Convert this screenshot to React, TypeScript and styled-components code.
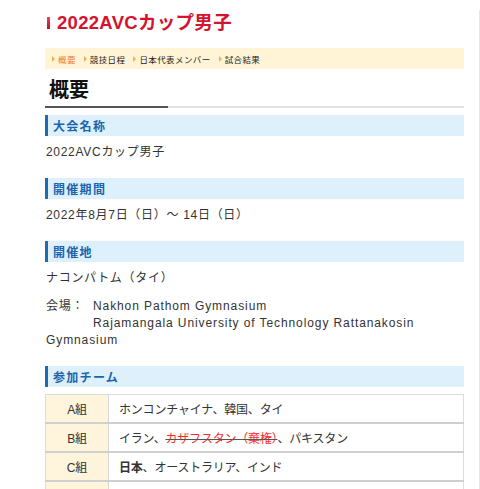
import React from "react";
import styled, { createGlobalStyle } from "styled-components";

const GlobalStyle = createGlobalStyle`
  html, body { margin: 0; padding: 0; background: #fff; }
  body {
    font-family: "Liberation Sans", "Noto Sans CJK JP", sans-serif;
    color: #333;
  }
`;

const Page = styled.div`
  display: flex;
  width: 480px;
  min-height: 489px;
`;

const Main = styled.main`
  width: 419px;
  margin-left: 45px;
  padding-top: 12px;
`;

const Side = styled.aside`
  margin-left: 15px;
  margin-top: 10px;
  border-left: 1px solid #e6e6e6;
`;

const Title = styled.h1`
  display: flex;
  align-items: center;
  gap: 7px;
  margin: 0;
  padding-left: 2px;
  font-size: 18.5px;
  font-weight: bold;
  color: #d5132d;
  line-height: 22px;
  letter-spacing: 0.3px;
`;

const TitleBar = styled.span`
  display: block;
  width: 3px;
  height: 12px;
  background: linear-gradient(#e8465a, #c80a24);
`;

const Crumbs = styled.nav`
  display: flex;
  align-items: center;
  height: 21px;
  margin-top: 14px;
  padding-left: 7px;
  background: #fff5d6;
  gap: 8px;
`;

const Crumb = styled.span<{ $active?: boolean }>`
  display: flex;
  align-items: center;
  gap: 3px;
  font-size: 8.5px;
  letter-spacing: 0.4px;
  color: ${(p) => (p.$active ? "#f27b2c" : "#222")};
`;

const Arrow = styled.span`
  display: block;
  width: 0;
  height: 0;
  border-top: 3px solid transparent;
  border-bottom: 3px solid transparent;
  border-left: 3px solid #f6b04a;
`;

const PageHeading = styled.h2`
  margin: 8px 0 0;
  padding: 0 0 3px 4px;
  font-size: 20px;
  line-height: 26px;
  font-weight: bold;
  color: #111;
  border-bottom: 2px solid #e2e2e2;
  position: relative;
  &::after {
    content: "";
    position: absolute;
    left: 0;
    bottom: -2px;
    width: 123px;
    height: 2px;
    background: #555;
  }
`;

const Section = styled.section`
  margin-top: 7px;
  margin-bottom: 17px;
`;

const SectionHeader = styled.h3`
  margin: 0;
  height: 21px;
  display: flex;
  align-items: center;
  padding-left: 5px;
  border-left: 3px solid #1b6cb5;
  background: #dff0fd;
  color: #1b63ab;
  font-size: 12px;
  font-weight: bold;
  letter-spacing: 1.3px;
`;

const Text = styled.p`
  margin: 8px 0 0 1px;
  font-size: 12px;
  line-height: 17px;
  letter-spacing: 0.7px;
  color: #333;
  & + & {
    margin-top: 11px;
  }
`;

const Latin = styled.span`
  letter-spacing: 0.9px;
`;

const Label = styled.span`
  display: inline-block;
  width: 47px;
`;

const Table = styled.table`
  width: 100%;
  margin-top: 7px;
  border-collapse: collapse;
  border: 1px solid #dcdcdc;
  font-size: 12px;
  letter-spacing: -0.2px;
`;

const Row = styled.tr`
  & + & td,
  & + & th {
    border-top: 2px solid #cfcfcf;
  }
`;

const Group = styled.th`
  width: 62px;
  height: 27px;
  padding: 0;
  background: #fff4dc;
  font-weight: normal;
  text-align: center;
  color: #333;
  border-right: 1px solid #d6d6d6;
  border-top: 1px solid #dcdcdc;
`;

const Teams = styled.td`
  padding: 0 10px;
  color: #333;
  border-top: 1px solid #dcdcdc;
`;

const Withdrawn = styled.s`
  color: #ff2a2a;
  text-decoration-color: #555;
`;

const teams: { group: string; content: React.ReactNode }[] = [
  { group: "A組", content: "ホンコンチャイナ、韓国、タイ" },
  {
    group: "B組",
    content: (
      <>
        イラン、<Withdrawn>カザフスタン（棄権）</Withdrawn>、パキスタン
      </>
    ),
  },
  {
    group: "C組",
    content: (
      <>
        <b>日本</b>、オーストラリア、インド
      </>
    ),
  },
  { group: "D組", content: "中国、チャイニーズタイペイ" },
];

export default function App() {
  return (
    <Page>
      <GlobalStyle />
      <Main>
        <Title>
          <TitleBar />
          2022AVCカップ男子
        </Title>
        <Crumbs>
          <Crumb $active>
            <Arrow />
            概要
          </Crumb>
          <Crumb>
            <Arrow />
            競技日程
          </Crumb>
          <Crumb>
            <Arrow />
            日本代表メンバー
          </Crumb>
          <Crumb>
            <Arrow />
            試合結果
          </Crumb>
        </Crumbs>
        <PageHeading>概要</PageHeading>
        <Section>
          <SectionHeader>大会名称</SectionHeader>
          <Text>2022AVCカップ男子</Text>
        </Section>
        <Section>
          <SectionHeader>開催期間</SectionHeader>
          <Text>2022年8月7日（日）～ 14日（日）</Text>
        </Section>
        <Section>
          <SectionHeader>開催地</SectionHeader>
          <Text>ナコンパトム（タイ）</Text>
          <Text>
            <Label>会場：</Label>
            <Latin>Nakhon Pathom Gymnasium</Latin>
            <br />
            <Label />
            <Latin>Rajamangala University of Technology Rattanakosin Gymnasium</Latin>
          </Text>
        </Section>
        <Section>
          <SectionHeader>参加チーム</SectionHeader>
          <Table>
            <tbody>
              {teams.map((t) => (
                <Row key={t.group}>
                  <Group>{t.group}</Group>
                  <Teams>{t.content}</Teams>
                </Row>
              ))}
            </tbody>
          </Table>
        </Section>
      </Main>
      <Side />
    </Page>
  );
}
